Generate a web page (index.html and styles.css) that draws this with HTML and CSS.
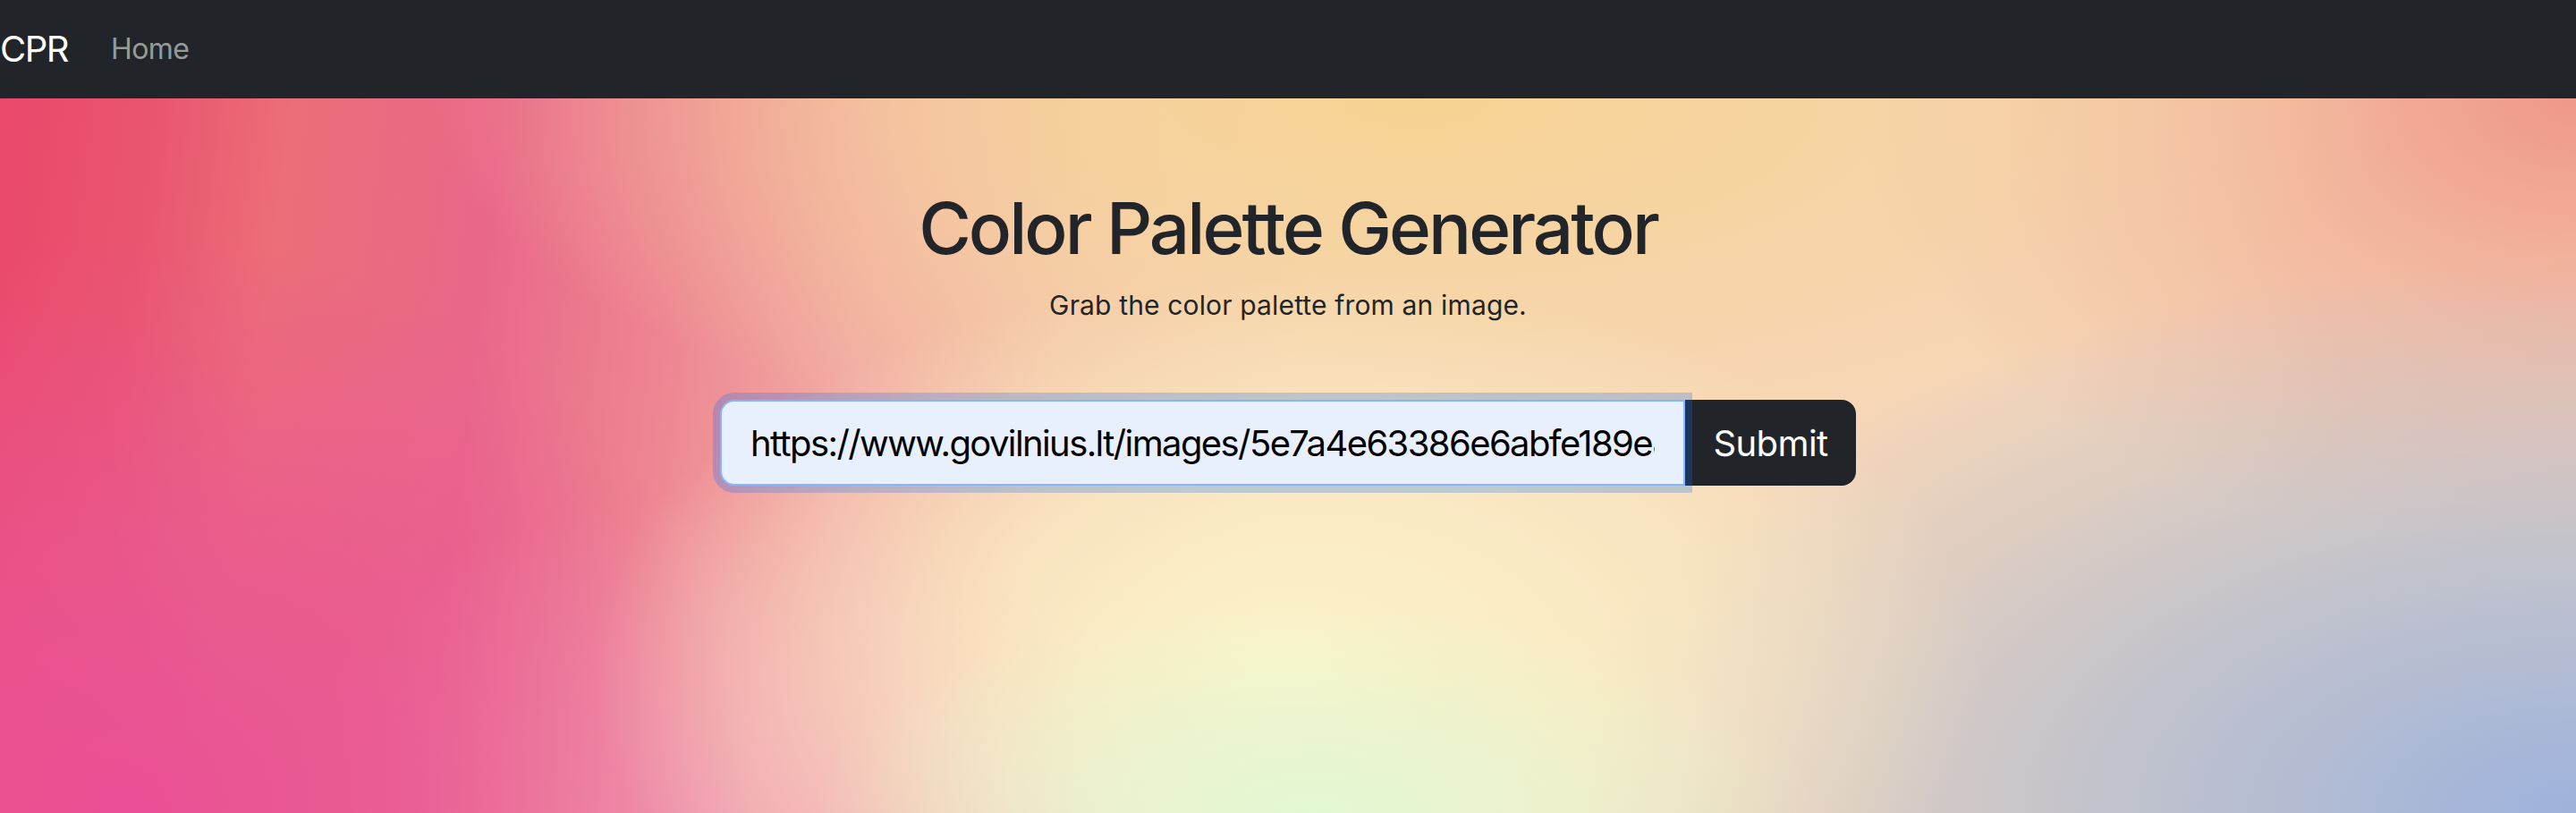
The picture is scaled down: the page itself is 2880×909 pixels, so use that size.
FILE: index.html
```html
<!DOCTYPE html>
<html lang="en">
<head>
<meta charset="utf-8">
<title>Color Palette Generator</title>
<link rel="stylesheet" href="styles.css">
</head>
<body>
<nav class="navbar">
  <a class="brand" href="#">CPR</a>
  <a class="nav-link" href="#">Home</a>
</nav>
<main class="hero">
  <h1 class="title">Color Palette Generator</h1>
  <p class="subtitle">Grab the color palette from an image.</p>
  <form class="input-group">
    <input class="url-input" type="text" value="https://www.govilnius.lt/images/5e7a4e63386e6abfe189e8a2.jpg">
    <button class="submit-btn" type="button">Submit</button>
  </form>
</main>
</body>
</html>
```

FILE: styles.css
```css
* { box-sizing: border-box; }
html, body { margin: 0; padding: 0; }
body {
  width: 2880px;
  height: 909px;
  overflow: hidden;
  font-family: Inter, "Liberation Sans", sans-serif;
  color: #212529;
  display: flex;
  flex-direction: column;
}
.navbar {
  height: 110px;
  flex: 0 0 110px;
  background: #212529;
  display: flex;
  align-items: center;
}
.brand {
  color: #fff;
  text-decoration: none;
  font-size: 40px;
  letter-spacing: -1.5px;
  margin-right: 32px;
  line-height: 60px;
}
.nav-link {
  color: rgba(255,255,255,.55);
  text-decoration: none;
  font-size: 32px;
  letter-spacing: -0.6px;
  padding: 0 16px;
  line-height: 48px;
}
.hero {
  flex: 1;
  display: flex;
  flex-direction: column;
  align-items: center;
  padding-top: 97px;
  background:
    radial-gradient(ellipse 560px 240px at 51% 100%, rgba(226,249,212,1) 0%, rgba(226,249,212,0) 100%),
    radial-gradient(ellipse 780px 440px at 50% 80%, rgba(252,244,202,1) 0%, rgba(252,244,202,.6) 50%, rgba(252,244,202,0) 100%),
    radial-gradient(ellipse 1150px 620px at 100% 100%, rgba(157,178,220,1) 0%, rgba(175,188,212,.75) 45%, rgba(200,205,205,0) 100%),
    radial-gradient(ellipse 1100px 420px at 55% 0%, rgba(246,210,146,1) 0%, rgba(246,212,155,.6) 50%, rgba(246,214,160,0) 100%),
    radial-gradient(ellipse 800px 520px at 100% 0%, rgba(239,152,138,1) 0%, rgba(240,165,145,.6) 45%, rgba(242,175,150,0) 100%),
    radial-gradient(ellipse 700px 650px at 5% 100%, rgba(233,80,150,1) 0%, rgba(233,85,150,.7) 45%, rgba(236,110,150,0) 100%),
    radial-gradient(ellipse 500px 360px at 28% 100%, rgba(240,160,180,.9) 0%, rgba(240,165,180,0) 100%),
    linear-gradient(97deg, #e9486a 0%, #e9566f 6%, #ec6e78 11%, #e9688a 19%, rgba(236,122,140,.88) 26%, rgba(238,140,148,.6) 33%, rgba(240,158,150,.28) 41%, rgba(242,170,150,0) 50%),
    #f6d6b8;
}
.title {
  margin: 0 0 16px;
  font-size: 80px;
  font-weight: 500;
  line-height: 96px;
  letter-spacing: -3px;
}
.subtitle {
  margin: 0 0 83px;
  font-size: 30px;
  letter-spacing: 0.15px;
  line-height: 45px;
}
.input-group {
  display: flex;
  align-items: stretch;
  margin: 0;
}
.url-input {
  position: relative;
  z-index: 5;
  width: 1079px;
  height: 96px;
  padding: 16px 32px;
  font-family: Inter, "Liberation Sans", sans-serif;
  font-size: 40px;
  letter-spacing: -1.6px;
  color: #000;
  background: #e8f0fe;
  border: 2px solid #86b7fe;
  border-radius: 16px 0 0 16px;
  box-shadow: 0 0 0 8px rgba(13,110,253,.25);
  outline: none;
}
.submit-btn {
  width: 191px;
  height: 96px;
  font-family: Inter, "Liberation Sans", sans-serif;
  font-size: 40px;
  letter-spacing: -0.6px;
  color: #fff;
  background: #212529;
  border: 2px solid #212529;
  border-radius: 0 16px 16px 0;
  padding: 16px 20px;
}
```
